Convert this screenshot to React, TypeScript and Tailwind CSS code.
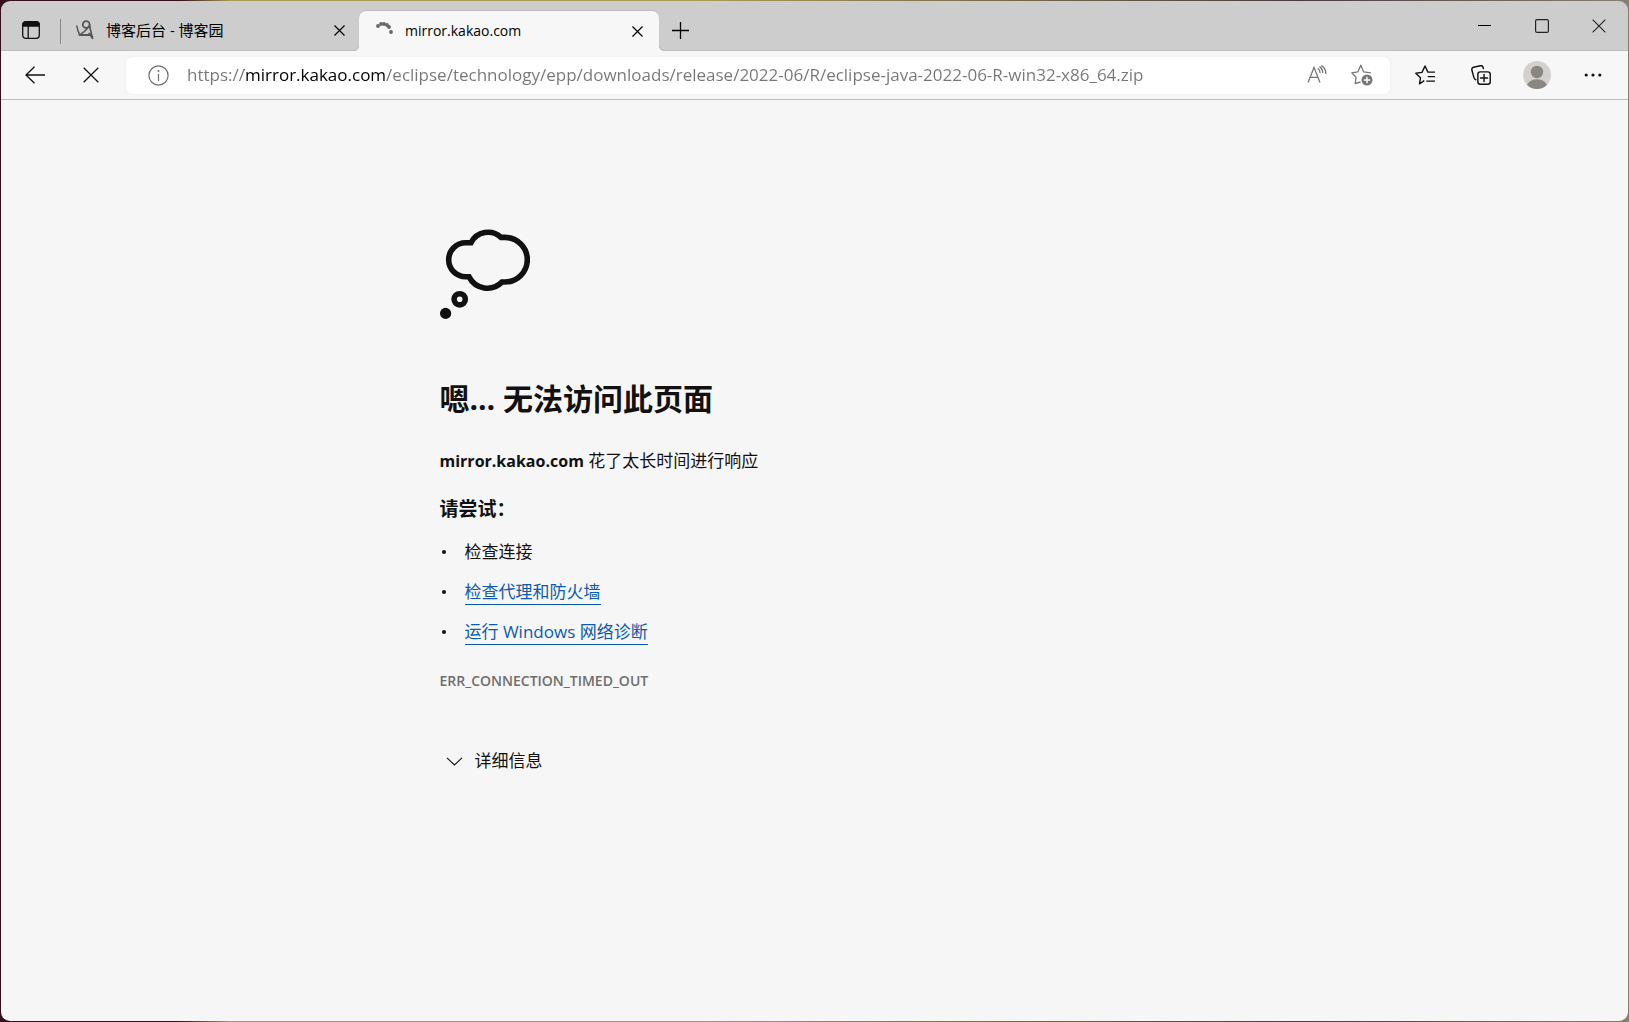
import type { ReactNode } from 'react';

const pageUrl = 'https://mirror.kakao.com/eclipse/technology/epp/downloads/release/2022-06/R/eclipse-java-2022-06-R-win32-x86_64.zip';

const suggestions = [
  { id: 'connection', label: '检查连接', link: false },
  { id: 'proxy', label: '检查代理和防火墙', link: true },
  { id: 'diagnostics', label: '运行 Windows 网络诊断', link: true },
];

const spinnerDots = [
  [2, 5],
  [5, 3],
  [8, 3],
  [11, 4],
  [13, 6],
  [15, 11],
];

function CloseIcon({ size, width = 1.2 }: { size: number; width?: number }) {
  return (
    <svg width={size} height={size} viewBox="0 0 16 16" fill="none" stroke="currentColor" strokeWidth={(width * 16) / size}>
      <path d="M.7.7l14.6 14.6M15.3.7L.7 15.3" />
    </svg>
  );
}

function TabActionsIcon() {
  return (
    <svg width="18" height="18" viewBox="0 0 18 18" fill="none" stroke="#111" strokeWidth="1.3">
      <rect x=".7" y=".7" width="16.6" height="16.6" rx="3" />
      <path d="M1 5V3.5A2.8 2.8 0 0 1 3.5 1h11A2.8 2.8 0 0 1 17 3.5V5z" fill="#111" />
      <path d="M6.2 5v12" />
    </svg>
  );
}

function BlogIcon() {
  return (
    <svg width="18" height="20" viewBox="0 0 18 20" fill="none" stroke="#555" strokeLinecap="round">
      <circle cx="10.200" cy="4.500" r="3.400" strokeWidth="1.800" />
      <path d="M.8 6C1.300 9 2.300 12 3.600 14.500" strokeWidth="1.500" />
      <path d="M3.600 14.800C7 13 10 10.500 13.500 6" strokeWidth="1.500" />
      <path d="M3.500 15h10" strokeWidth="1.800" />
      <path d="M13.600 5C14.300 10 15.600 14.500 16.800 18.800L13.200 13.500" strokeWidth="1.700" />
    </svg>
  );
}

function Spinner() {
  return (
    <svg width="18" height="20" viewBox="0 0 18 20" fill="#666">
      {spinnerDots.map(([cx, cy]) => (
        <circle key={`${cx}-${cy}`} cx={cx} cy={cy} r="1.9" />
      ))}
    </svg>
  );
}

function BackIcon() {
  return (
    <svg width="20" height="18" viewBox="0 0 20 18" fill="none" stroke="currentColor" strokeWidth="1.3">
      <path d="M9.500.8L1 9l8.500 8.200M1 9h19" />
    </svg>
  );
}

function InfoIcon() {
  return (
    <svg width="21" height="21" viewBox="0 0 21 21" fill="none" stroke="#6f6f6f" strokeWidth="1.200">
      <circle cx="10.500" cy="10.500" r="9.600" />
      <path d="M10.500 9v7" />
      <circle cx="10.500" cy="6" r="1" fill="#6f6f6f" stroke="none" />
    </svg>
  );
}

function ReadAloudIcon() {
  return (
    <svg width="20" height="20" viewBox="0 0 20 20" fill="none" stroke="#767676" strokeWidth="1.300">
      <path d="M1 17.500L7 2.500l6 15M3 12.300h8" />
      <path d="M10.800 3.300c1.600 1.200 2.300 2.700 2.300 4.700" />
      <path d="M12.500 1.600c2.200 1.500 3.300 3.700 3.300 6.500" />
      <path d="M14.200.7c3 1.500 4.700 4.500 4.700 8.300" />
    </svg>
  );
}

function AddFavoriteIcon() {
  return (
    <svg width="22" height="22" viewBox="0 0 22 22" fill="none" stroke="#767676" strokeWidth="1.300" strokeLinejoin="round">
      <path d="M9.500 18L4.200 19.500l.9-6.100L.8 8.800l6-.9L9.800 1.200l2.900 6.700 7.200.9" />
      <circle cx="16" cy="16" r="5.500" fill="#767676" stroke="none" />
      <path d="M16 12.800v6.400M12.800 16h6.400" stroke="#fff" strokeWidth="1.400" />
    </svg>
  );
}

function FavoritesIcon() {
  return (
    <svg width="20" height="20" viewBox="0 0 20 20" fill="none" stroke="currentColor" strokeWidth="1.400" strokeLinejoin="round">
      <path d="M9.300 15.700L4.500 18.800l1-6L.8 8.300l6.200-.9L10 1l2.900 6.100H20" />
      <path d="M12.800 11.600H20M11.300 16.100H20" />
    </svg>
  );
}

function CollectionsIcon() {
  return (
    <svg width="20" height="20" viewBox="0 0 21 21" fill="none" stroke="currentColor" strokeWidth="1.500" strokeLinecap="round">
      <rect x="7.200" y="7.200" width="13" height="13" rx="2.600" />
      <path d="M13.700 10v7.400M10 13.700h7.400" />
      <path d="M5 15.500C3.800 15 3.300 14.200 3 13L.9 5.300C.6 3.800 1.200 2.800 2.600 2.400L9.800.8c1.400-.3 2.400.2 2.800 1.500l.4 1.500" />
    </svg>
  );
}

function Avatar() {
  return (
    <svg width="28" height="28" viewBox="0 0 28 28">
      <clipPath id="avatar-clip">
        <circle cx="14" cy="14" r="14" />
      </clipPath>
      <g clipPath="url(#avatar-clip)">
        <rect width="28" height="28" fill="#d3d1cd" />
        <circle cx="14" cy="11" r="6.200" fill="#8a8682" />
        <ellipse cx="14" cy="25.500" rx="10.200" ry="7.200" fill="#8a8682" />
      </g>
    </svg>
  );
}

function ThoughtCloud() {
  return (
    <svg width="90" height="90" viewBox="0 0 90 90" fill="none" stroke="#111" strokeWidth="5.600">
      <path d="M31 13.800H25.700a17 17 0 0 0 0 34H29A20.500 20.500 0 0 0 62 53h3a22.300 22.300 0 0 0 0-44.600h-4A19 19 0 0 0 31 13.800z" />
      <circle cx="19.700" cy="70.300" r="5.600" />
      <circle cx="5.600" cy="84.400" r="5.600" fill="#111" stroke="none" />
    </svg>
  );
}

function ToolbarButton({ label, children }: { label: string; children: ReactNode }) {
  return (
    <button type="button" aria-label={label} className="flex h-10 w-14 items-center justify-center">
      {children}
    </button>
  );
}

function WindowButton({ label, children }: { label: string; children: ReactNode }) {
  return (
    <button type="button" aria-label={label} className="flex h-[49px] w-[57px] items-center justify-center">
      {children}
    </button>
  );
}

// Concave corner where the active tab meets the toolbar
function TabFoot({ flip = false }: { flip?: boolean }) {
  return (
    <svg
      className={flip ? 'absolute bottom-0 -right-[5px] -scale-x-100' : 'absolute bottom-0 -left-[5px]'}
      width="5"
      height="5"
      viewBox="0 0 5 5"
    >
      <path d="M5 0A5 5 0 0 1 0 5h5z" fill="#f7f7f7" />
      <path d="M4.500 0A4.500 4.500 0 0 1 0 4.500" fill="none" stroke="#b9b9b9" />
    </svg>
  );
}

function TabStrip() {
  return (
    <div className="flex h-[50px] items-end border-b border-[#bdbdbd] bg-[#cdcdcd] px-px text-black">
      <button type="button" aria-label="标签页操作菜单" className="flex h-10 w-[58px] items-center justify-center">
        <TabActionsIcon />
      </button>
      <div className="mb-[6px] h-[25px] w-px bg-[#888]" />
      <div className="flex h-10 w-[298px] items-center pr-[14px] pl-[15px]">
        <BlogIcon />
        <span className="ml-3 flex-1 truncate text-[15px] leading-5">博客后台 - 博客园</span>
        <button type="button" aria-label="关闭标签页">
          <CloseIcon size={11} />
        </button>
      </div>
      <div className="relative -mb-px flex h-10 w-[300px] items-center rounded-t-[7px] bg-[#f7f7f7] pr-4 pl-[17px] shadow-[0_-1px_1px_#bebebe]">
        <TabFoot />
        <Spinner />
        <span className="ml-[11px] flex-1 truncate text-sm">mirror.kakao.com</span>
        <button type="button" aria-label="关闭标签页">
          <CloseIcon size={11} />
        </button>
        <TabFoot flip />
      </div>
      <button type="button" aria-label="新建标签页" className="flex h-10 w-[42px] items-center justify-center">
        <svg width="17" height="17" viewBox="0 0 17 17" stroke="currentColor" strokeWidth="1.300">
          <path d="M8.500 0v17M0 8.500h17" />
        </svg>
      </button>
      <div className="ml-auto flex text-[#222]">
        <WindowButton label="最小化">
          <svg width="13" height="13" viewBox="0 0 13 13" stroke="#000">
            <path d="M0 6.500h13" />
          </svg>
        </WindowButton>
        <WindowButton label="最大化">
          <svg width="14" height="14" viewBox="0 0 14 14" fill="none" stroke="currentColor" strokeWidth="1.200">
            <rect x=".6" y=".6" width="12.800" height="12.800" rx="1.500" />
          </svg>
        </WindowButton>
        <WindowButton label="关闭">
          <CloseIcon size={14} width={1.1} />
        </WindowButton>
      </div>
    </div>
  );
}

function Toolbar() {
  return (
    <div className="flex h-[49px] items-center border-b border-[#bdbdbd] bg-[#f7f7f7] pr-[7px] pl-[6px] text-[#111]">
      <ToolbarButton label="返回">
        <BackIcon />
      </ToolbarButton>
      <ToolbarButton label="停止加载">
        <CloseIcon size={16} width={1.3} />
      </ToolbarButton>
      <div className="mr-[7px] ml-[7px] flex h-[37px] flex-1 items-center rounded-md bg-white pr-[17px] pl-[22px] shadow-[0_0_3px_#e8e8e8]">
        <button type="button" aria-label="查看站点信息">
          <InfoIcon />
        </button>
        {/* the host part of the address is darker than the rest */}
        <input
          type="text"
          aria-label="地址和搜索栏"
          defaultValue={pageUrl}
          className="ml-[18px] min-w-0 flex-1 bg-[linear-gradient(90deg,#767676_57px,#000_57px,#000_198px,#767676_198px)] bg-clip-text text-[17px] leading-6 text-transparent outline-none"
        />
        <button type="button" aria-label="大声朗读此页内容" className="mr-6">
          <ReadAloudIcon />
        </button>
        <button type="button" aria-label="将此页面添加到收藏夹">
          <AddFavoriteIcon />
        </button>
      </div>
      <ToolbarButton label="收藏夹">
        <FavoritesIcon />
      </ToolbarButton>
      <ToolbarButton label="集锦">
        <CollectionsIcon />
      </ToolbarButton>
      <ToolbarButton label="个人资料">
        <Avatar />
      </ToolbarButton>
      <ToolbarButton label="设置及其他">
        <svg width="18" height="4" viewBox="0 0 18 4" fill="currentColor">
          <circle cx="2.200" cy="2" r="1.600" />
          <circle cx="9" cy="2" r="1.600" />
          <circle cx="15.800" cy="2" r="1.600" />
        </svg>
      </ToolbarButton>
    </div>
  );
}

function ErrorPage() {
  return (
    <main className="flex-1 bg-[#f6f6f6] text-[#111]">
      <div className="mx-auto max-w-[750px] pt-[129px] leading-6">
        <ThoughtCloud />
        <h1 className="mt-[60px] text-[30px] leading-10 font-bold">嗯… 无法访问此页面</h1>
        <p className="mt-[30px] text-[17px]">
          <strong className="text-base">mirror.kakao.com</strong> 花了太长时间进行响应
        </p>
        <h2 className="mt-6 text-[19px] leading-6 font-bold">请尝试：</h2>
        <ul className="mt-[19px] space-y-4 text-[17px]">
          {suggestions.map((item) => (
            <li key={item.id} className="flex h-6 items-center">
              <span className="mr-[19px] ml-[2px] size-1 rounded-full bg-[#111]" />
              {item.link ? (
                <a href={`#${item.id}`} className="border-b border-[#0b5cad] text-[#0b5cad]">
                  {item.label}
                </a>
              ) : (
                <span>{item.label}</span>
              )}
            </li>
          ))}
        </ul>
        <div className="mt-[25px] text-sm leading-6 font-semibold text-[#6e6e6e]">ERR_CONNECTION_TIMED_OUT</div>
        <button type="button" className="mt-14 flex items-center gap-3 pl-[6px] text-[17px]">
          <svg width="17" height="9" viewBox="0 0 17 9" fill="none" stroke="currentColor" strokeWidth="1.100">
            <path d="M1 .8l7.500 7.200L16 .8" />
          </svg>
          详细信息
        </button>
      </div>
    </main>
  );
}

export default function App() {
  return (
    <div className="h-screen bg-[linear-gradient(90deg,#35101b,#35101b_180px,#a99a55_230px,#a99a55_700px,#4a3b40_1300px,#85806f)] p-px font-['Open_Sans','Noto_Sans_CJK_SC',sans-serif]">
      <div className="flex h-full flex-col overflow-hidden rounded-[9px]">
        <TabStrip />
        <Toolbar />
        <ErrorPage />
      </div>
    </div>
  );
}
